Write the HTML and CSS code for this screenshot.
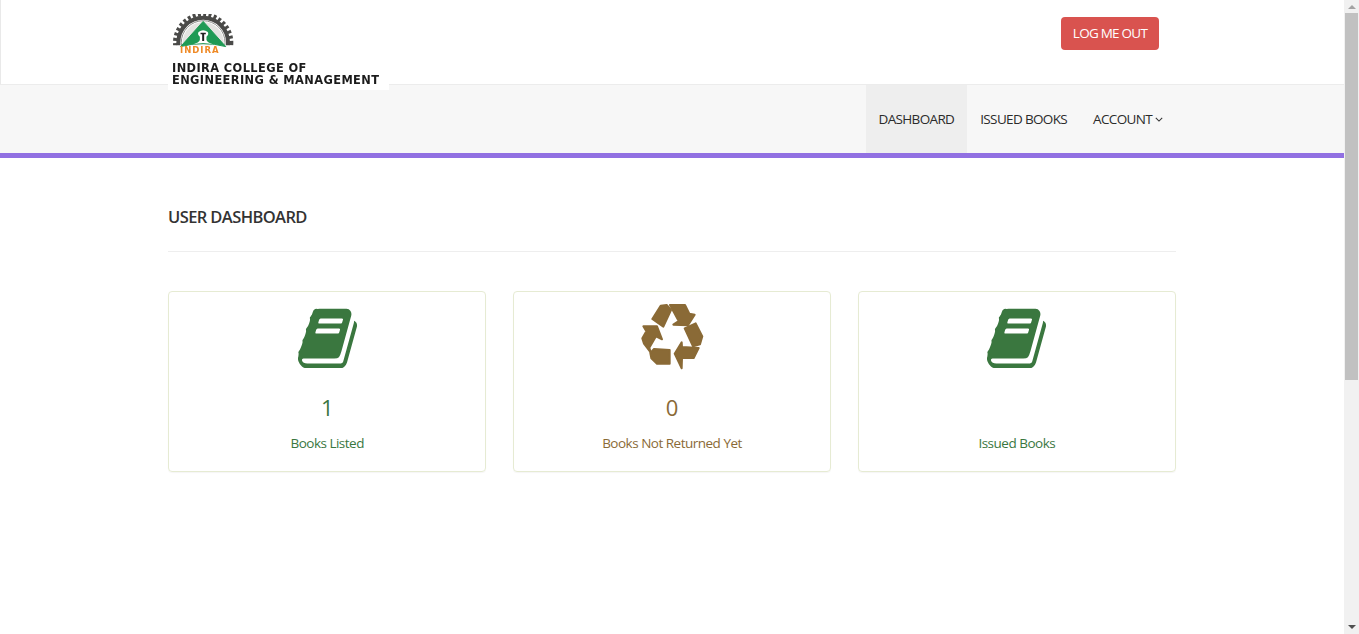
FILE: index.html
```html
<!DOCTYPE html>
<html lang="en">
<head>
<meta charset="utf-8">
<title>User Dashboard</title>
<link rel="stylesheet" href="styles.css">
</head>
<body>
<div class="window">
  <div class="page">
    <header class="top">
      <div class="container top-row">
        <div class="logo">
          <svg class="emblem" viewBox="36 42 190 108" width="63" height="36" aria-hidden="true">
            <defs><clipPath id="gearclip"><rect x="30" y="30" width="200" height="106"/></clipPath></defs>
            <g clip-path="url(#gearclip)">
              <circle cx="130" cy="128" r="62" fill="#e4e4e1"/>
              <circle cx="130" cy="128" r="66" fill="none" stroke="#8d8d8a" stroke-width="3"/>
              <circle cx="130" cy="128" r="75" fill="none" stroke="#4a4a48" stroke-width="12"/>
              <circle cx="130" cy="128" r="85" fill="none" stroke="#4a4a48" stroke-width="12" stroke-dasharray="9 7"/>
            </g>
            <path d="M130 64 L198 140 Q130 122 62 140Z" fill="#1f9a55" stroke="#1f9a55" stroke-width="3" stroke-linejoin="round"/>
            <path d="M98 134 Q118 128 120 120 L120 110 Q112 104 116 96 Q130 86 144 96 Q148 104 140 110 L140 120 Q142 128 162 134 Q130 124 98 134Z" fill="#fff"/>
            <path d="M122 98h16v5h-5v20h-6v-20h-5z" fill="#222"/>
          </svg>
          <span class="indira">INDIRA</span>
          <span class="college">INDIRA COLLEGE OF<br>ENGINEERING &amp; MANAGEMENT</span>
        </div>
        <a class="logout" href="#">LOG ME OUT</a>
      </div>
    </header>
    <nav class="nav">
      <div class="container nav-row">
        <a class="nav-link active" href="#">DASHBOARD</a>
        <a class="nav-link" href="#">ISSUED BOOKS</a>
        <a class="nav-link" href="#">ACCOUNT
          <svg class="caret" viewBox="0 0 10 6" width="8" height="5" aria-hidden="true"><path d="M1 1l4 4 4-4" fill="none" stroke="#333" stroke-width="1.3"/></svg>
        </a>
      </div>
    </nav>
    <main class="container content">
      <h1 class="title">USER DASHBOARD</h1>
      <hr class="rule">
      <div class="cards">
        <section class="card green">
          <svg class="icon book" viewBox="0 112 1664 1540" preserveAspectRatio="none" width="59" height="60" aria-hidden="true"><path fill="currentColor" d="M1639 478q40 57 18 129l-275 906q-19 64-76.5 107.5t-122.5 43.5h-923q-77 0-148.5-53.5t-99.5-130.5q-24-66-2-125 0-4 3-27t4-37q1-8-3-21.5t-3-19.5q2-11 8-21t16.5-23.5 16.5-23.5q23-38 45-91.5t30-91.5q3-10 .5-30t-.5-28q3-11 17-28t17-23q21-36 42-92t25-90q1-9-2.5-32t.5-28q4-13 22-30.5t22-22.5q19-26 42.5-84.5t27.5-96.5q1-8-3-25.5t-2-26.5q2-8 9-18t18-23 17-21q8-12 16.5-30.5t15-35 16-36 19.5-32 26.5-23.5 36-11.5 47.5 5.5l-1 3q38-9 51-9h761q74 0 114 56t18 130l-274 906q-36 119-71.5 153.5t-128.5 34.5h-869q-27 0-38 15-11 16-1 43 24 70 144 70h923q29 0 56-15.5t35-41.5l300-987q7-22 5-57 38 15 59 43zm-1064 2q-4 13 2 22.5t20 9.5h608q13 0 25.5-9.5t16.5-22.5l21-64q4-13-2-22.5t-20-9.5h-608q-13 0-25.5 9.5t-16.5 22.5zm-83 256q-4 13 2 22.5t20 9.5h608q13 0 25.5-9.5t16.5-22.5l21-64q4-13-2-22.5t-20-9.5h-608q-13 0-25.5 9.5t-16.5 22.5z"/></svg>
          <div class="count">1</div>
          <div class="label">Books Listed</div>
        </section>
        <section class="card brown">
          <svg class="icon recycle" viewBox="60 27 192 198" width="64" height="66" aria-hidden="true">
            <g fill="currentColor" stroke="currentColor" stroke-width="6" stroke-linejoin="round">
              <path d="M97 72 L122 32 L140 30 L153 45 L130 95Z"/>
              <path d="M150 30 L195 30 L208 56 L224 59 L204 91 L160 89 L176 78 Z"/>
              <path d="M194 100 L227 85 L247 124 L240 148 L219 154Z"/>
              <path d="M236 159 L221 189 L186 189 L185 220 L164 176 L185 142 L186 156Z"/>
              <path d="M102 162 L149 165 L149 206 L111 206 L94 190 L91 174Z"/>
              <path d="M70 94 L111 94 L126 133 L108 124 L88 158 L92 172 L72 146 L67 130 L79 109Z"/>
            </g>
          </svg>
          <div class="count">0</div>
          <div class="label">Books Not Returned Yet</div>
        </section>
        <section class="card green">
          <svg class="icon book" viewBox="0 112 1664 1540" preserveAspectRatio="none" width="59" height="60" aria-hidden="true"><path fill="currentColor" d="M1639 478q40 57 18 129l-275 906q-19 64-76.5 107.5t-122.5 43.5h-923q-77 0-148.5-53.5t-99.5-130.5q-24-66-2-125 0-4 3-27t4-37q1-8-3-21.5t-3-19.5q2-11 8-21t16.5-23.5 16.5-23.5q23-38 45-91.5t30-91.5q3-10 .5-30t-.5-28q3-11 17-28t17-23q21-36 42-92t25-90q1-9-2.5-32t.5-28q4-13 22-30.5t22-22.5q19-26 42.5-84.5t27.5-96.5q1-8-3-25.5t-2-26.5q2-8 9-18t18-23 17-21q8-12 16.5-30.5t15-35 16-36 19.5-32 26.5-23.5 36-11.5 47.5 5.5l-1 3q38-9 51-9h761q74 0 114 56t18 130l-274 906q-36 119-71.5 153.5t-128.5 34.5h-869q-27 0-38 15-11 16-1 43 24 70 144 70h923q29 0 56-15.5t35-41.5l300-987q7-22 5-57 38 15 59 43zm-1064 2q-4 13 2 22.5t20 9.5h608q13 0 25.5-9.5t16.5-22.5l21-64q4-13-2-22.5t-20-9.5h-608q-13 0-25.5 9.5t-16.5 22.5zm-83 256q-4 13 2 22.5t20 9.5h608q13 0 25.5-9.5t16.5-22.5l21-64q4-13-2-22.5t-20-9.5h-608q-13 0-25.5 9.5t-16.5 22.5z"/></svg>
          <div class="count">&nbsp;</div>
          <div class="label">Issued Books</div>
        </section>
      </div>
    </main>
  </div>
  <div class="scrollbar" aria-hidden="true">
    <span class="arrow up"></span>
    <span class="thumb"></span>
    <span class="track"></span>
    <span class="arrow down"></span>
  </div>
</div>
</body>
</html>
```

FILE: styles.css
```css
* { box-sizing: border-box; }
html, body { margin: 0; height: 100%; overflow: hidden; }
body { font-family: "Open Sans", "Noto Sans", sans-serif; color: #333; background: #fff; }
a { text-decoration: none; color: inherit; }

.window { display: flex; height: 634px; }
.page { flex: 1; min-width: 0; }
.container { width: 1008px; margin-left: 168px; }

.top { height: 85px; border: 1px solid #e9e9e9; border-top: 0; border-right: 0; border-bottom-color: #ececec; }
.top-row { display: flex; justify-content: space-between; align-items: flex-start; margin-left: 167px; width: 991px; }
.logo { position: relative; z-index: 2; width: 221px; height: 90px; background: #fff; padding: 14px 0 0 4px; display: flex; flex-direction: column; filter: blur(.35px); }
.emblem { display: block; flex: none; }
.indira { font: 700 8.5px/8px "DejaVu Sans", sans-serif; letter-spacing: 1px; color: #ef8a26; margin: -4px 0 0 8px; height: 8px; position: relative; }
.college { font: 700 11.4px/12px "DejaVu Sans", sans-serif; letter-spacing: .4px; color: #1c1c1c; margin-top: 8px; white-space: nowrap; }
.logout { margin-top: 17px; width: 98px; height: 33px; background: #d9534f; color: #fff; border-radius: 4px; font-size: 13.5px; letter-spacing: -.75px; line-height: 33px; text-align: center; }

.nav { height: 73px; background: #f7f7f7; border-bottom: 5px solid #9170e2; }
.nav-row { display: flex; justify-content: flex-end; height: 68px; }
.nav-link { display: flex; align-items: center; gap: 3px; padding: 0 13px 1px; font-size: 13.5px; letter-spacing: -.65px; color: #2b2b2b; }
.nav-link.active { background: #eee; }
.caret { margin-top: 1px; }

.content { padding-top: 47px; }
.title { margin: 0; font-size: 16.5px; line-height: 24px; font-weight: 600; letter-spacing: -.6px; color: #333; }
.rule { margin: 22px 0 39px; border: 0; border-top: 1px solid #eee; }

.cards { display: flex; justify-content: space-between; }
.card { width: 318.4px; height: 181px; border: 1px solid #e6ebd3; border-radius: 4px; display: flex; flex-direction: column; align-items: center; padding-top: 12px; box-shadow: 0 1px 1px rgba(0,0,0,.04); }
.card.green { color: #3a773f; }
.card.brown { color: #8a6a36; }
.icon { display: block; flex: none; }
.icon.book { margin-top: 4px; }
.icon.recycle { margin-bottom: -2px; }
.count { margin-top: 24px; font-size: 22px; line-height: 30px; }
.label { margin-top: 11px; font-size: 13.5px; letter-spacing: -.5px; line-height: 20px; }

.scrollbar { width: 15px; flex: none; background: #f1f1f1; display: flex; flex-direction: column; align-items: center; }
.arrow { flex: none; width: 0; height: 0; border-left: 4px solid transparent; border-right: 4px solid transparent; }
.arrow.up { margin: 5px 0 4px; border-bottom: 4px solid #a3a3a3; }
.arrow.down { margin: 4px 0 5px; border-top: 4px solid #505050; }
.thumb { flex: none; width: 13px; height: 367px; background: #c1c1c1; }
.track { flex: 1; }
```
